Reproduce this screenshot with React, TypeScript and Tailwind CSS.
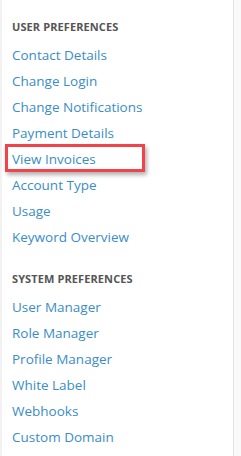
import React from "react";

const userPrefs = [
  "Contact Details",
  "Change Login",
  "Change Notifications",
  "Payment Details",
  "View Invoices",
  "Account Type",
  "Usage",
  "Keyword Overview",
];

const systemPrefs = [
  "User Manager",
  "Role Manager",
  "Profile Manager",
  "White Label",
  "Webhooks",
  "Custom Domain",
];

function Section({ title, items, highlight }: { title: string; items: string[]; highlight?: string }) {
  return (
    <div>
      <h3 className="pl-[10px] text-[11px] font-bold uppercase tracking-[0.1px] text-[#555] leading-[14px]">{title}</h3>
      <ul className="mt-[8px]">
        {items.map((item) => (
          <li key={item} className="relative h-[26px]">
            {item === highlight && (
              <div className="absolute left-[3px] top-[-2px] w-[140px] h-[28px] border-[3px] border-[#f2434a] shadow-[2px_3px_4px_rgba(0,0,0,0.3)]" />
            )}
            <a href="#" className="block pl-[10px] text-[13.5px] font-medium leading-[26px] text-[#3a8dc6]">
              {item}
            </a>
          </li>
        ))}
      </ul>
    </div>
  );
}

export default function App() {
  return (
    <div className="flex w-[241px] h-[456px] bg-[#f9f9f9] overflow-hidden" style={{ fontFamily: "'Open Sans', 'Noto Sans', sans-serif" }}>
      <div className="w-[2px] bg-[#f2f2f2]" />
      <div className="w-[232px] bg-white border-r border-[#e4e4e4] pt-[20px]">
        <Section title="User Preferences" items={userPrefs} highlight="View Invoices" />
        <div className="h-[22px]" />
        <Section title="System Preferences" items={systemPrefs} />
      </div>
    </div>
  );
}
